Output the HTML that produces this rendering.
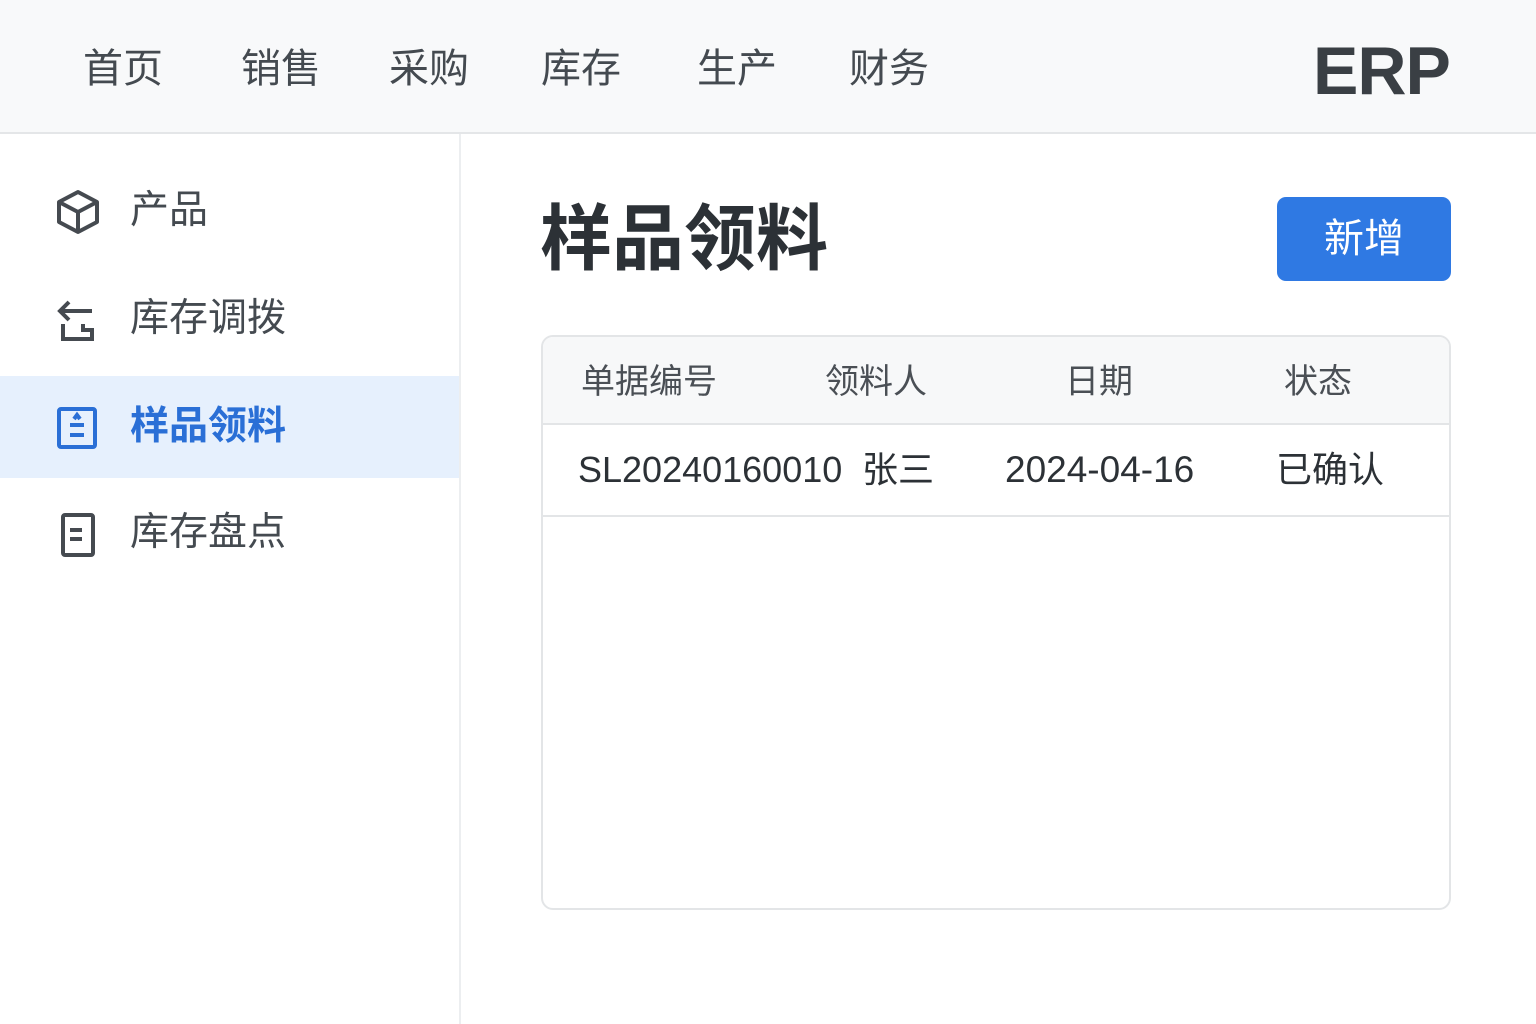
<!DOCTYPE html>
<html><head><meta charset="utf-8"><style>
*{margin:0;padding:0;box-sizing:border-box}
body{width:1536px;height:1024px;background:#fff;font-family:"Liberation Sans","Noto Sans CJK SC",sans-serif;position:relative;overflow:hidden;color:#3a3f44}
.top{position:absolute;left:0;top:0;width:1536px;height:134px;background:#f8f9fa;border-bottom:2px solid #e4e6e8}
.nav{position:absolute;top:43px;font-size:40px;color:#444a50;line-height:52px}
.erp{position:absolute;left:1313px;top:31px;font-size:68px;font-weight:bold;color:#3a3f44;letter-spacing:-1px;line-height:80px}
.side{position:absolute;left:0;top:134px;width:461px;height:890px;border-right:2px solid #eceef0;background:#fff}
.item{position:absolute;left:0;width:459px;height:102px}
.item .t{position:absolute;left:130px;top:26px;font-size:39px;line-height:50px;color:#444a50}
.item svg{position:absolute;left:55px;top:29px}
.act{background:#e6f0fd}
.act .t{color:#2a6fd6;font-weight:bold}
h1{position:absolute;left:540px;top:198px;font-size:72px;font-weight:bold;color:#2c3136;line-height:84px}
.btn{position:absolute;left:1277px;top:197px;width:174px;height:84px;background:#2f79e3;border-radius:9px;color:#fff;font-size:40px;text-align:center;line-height:84px}
.tbl{position:absolute;left:541px;top:335px;width:910px;height:575px;border:2px solid #e3e5e7;border-radius:12px;overflow:hidden}
.hd{position:absolute;left:0;top:0;width:100%;height:88px;background:#f7f8f9;border-bottom:2px solid #e3e5e7}
.row{position:absolute;left:0;top:88px;width:100%;height:92px;border-bottom:2px solid #e3e5e7}
.c{position:absolute;line-height:50px}
.hd .c{top:20px;font-size:34px;color:#4a4f55}
.row .c{top:20px;font-size:36px;color:#2c3136}
</style></head><body>
<div class="top">
<div class="nav" style="left:83px">首页</div>
<div class="nav" style="left:241px">销售</div>
<div class="nav" style="left:389px">采购</div>
<div class="nav" style="left:541px">库存</div>
<div class="nav" style="left:697px">生产</div>
<div class="nav" style="left:849px">财务</div>
<div class="erp">ERP</div>
</div>
<div class="side">
<div class="item" style="top:26px"><svg width="46" height="46" viewBox="0 0 46 46" fill="none" stroke="#454a50" stroke-width="4" stroke-linejoin="round"><path d="M23 3 L42 13 L42 33 L23 43 L4 33 L4 13 Z"/><path d="M4 13 L23 23 L42 13 M23 23 L23 43"/></svg><div class="t">产品</div></div>
<div class="item" style="top:134px"><svg width="46" height="46" viewBox="0 0 46 46" fill="none" stroke="#454a50" stroke-width="4"><path d="M6 14 H37 M14 5 L5 14 L14 23"/><path d="M8 27 V42 H37 V33 H28 V27"/></svg><div class="t">库存调拨</div></div>
<div class="item act" style="top:242px"><svg width="46" height="46" viewBox="0 0 46 46" fill="none" stroke="#2a6fd6" stroke-width="4"><rect x="4" y="4" width="36" height="38" rx="2"/><path d="M15 20 H29 M15 30 H29 M19 14 L22 10 L25 14"/></svg><div class="t">样品领料</div></div>
<div class="item" style="top:348px"><svg width="46" height="46" viewBox="0 0 46 46" fill="none" stroke="#454a50" stroke-width="4"><rect x="8" y="4" width="30" height="40" rx="2"/><path d="M15 19 H27 M15 28 H27"/></svg><div class="t">库存盘点</div></div>
</div>
<h1>样品领料</h1>
<div class="btn">新增</div>
<div class="tbl">
<div class="hd"><div class="c" style="left:38px">单据编号</div><div class="c" style="left:282px">领料人</div><div class="c" style="left:522px">日期</div><div class="c" style="left:741px">状态</div></div>
<div class="row"><div class="c" style="left:35px">SL20240160010</div><div class="c" style="left:319px">张三</div><div class="c" style="left:462px;font-size:37px">2024-04-16</div><div class="c" style="left:733px">已确认</div></div>
</div>
</body></html>
